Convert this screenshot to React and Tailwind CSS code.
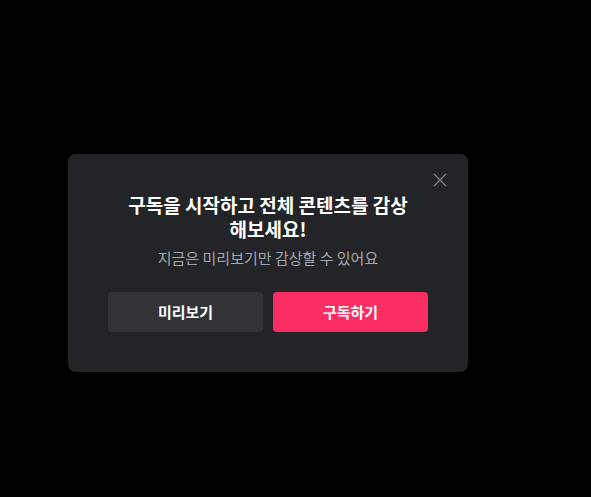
import React from 'react';

const IconClose = () => (
  <svg xmlns="http://www.w3.org/2000/svg" className="h-[14px] w-[14px]" viewBox="0 0 14 14" fill="none" stroke="currentColor" strokeWidth={1.3}>
    <path d="M1 1l12 12M13 1L1 13" />
  </svg>
);

export default function App() {
  return (
    <div
      className="min-h-[497px] w-full bg-black pt-[154px] pl-[68px]"
      style={{ fontFamily: '"Noto Sans CJK KR", "Noto Sans", sans-serif' }}
    >
      {/* 구독 유도 모달 */}
      <div className="relative w-[400px] rounded-lg bg-[#232428] px-10 pt-[39px] pb-10 text-center">
        <button className="absolute top-[19px] right-[21px] text-[#85878c]" aria-label="닫기">
          <IconClose />
        </button>
        <h2 className="text-[19px] leading-6 font-bold text-white">
          구독을 시작하고 전체 콘텐츠를 감상
          <br />
          해보세요!
        </h2>
        <p className="mt-[7px] text-[15px] leading-5 text-[#a3a6ad]">
          지금은 미리보기만 감상할 수 있어요
        </p>
        <div className="mt-6 flex gap-[10px]">
          <button className="h-10 flex-1 rounded bg-[#323337] text-[15px] font-bold text-white">
            미리보기
          </button>
          <button className="h-10 flex-1 rounded bg-[#fc2d62] text-[15px] font-bold text-white">
            구독하기
          </button>
        </div>
      </div>
    </div>
  );
}
